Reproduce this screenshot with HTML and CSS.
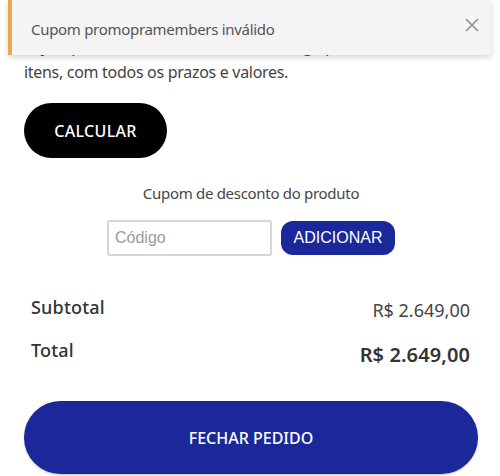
FILE: index.html
```html
<!DOCTYPE html>
<html lang="pt-BR">
<head>
<meta charset="utf-8">
<title>Carrinho</title>
<link rel="stylesheet" href="styles.css">
</head>
<body>
<main class="page">
  <p class="intro"><span class="intro-line">Veja o prazo e o valor do frete de entrega para seus</span><span class="intro-line">itens, com todos os prazos e valores.</span></p>
  <button class="btn-calc" type="button">CALCULAR</button>
  <section class="coupon">
    <div class="coupon-label">Cupom de desconto do produto</div>
    <div class="coupon-row">
      <input class="coupon-input" type="text" placeholder="Código">
      <button class="btn-add" type="button">ADICIONAR</button>
    </div>
  </section>
  <div class="summary">
    <div class="sum-row sub"><span class="sum-label">Subtotal</span><span class="sum-value">R$ 2.649,00</span></div>
    <div class="sum-row total"><span class="sum-label">Total</span><span class="sum-value">R$ 2.649,00</span></div>
  </div>
  <button class="btn-checkout" type="button">FECHAR PEDIDO</button>
</main>
<div class="toast">
  <span class="toast-text">Cupom promopramembers inválido</span>
  <svg class="toast-close" width="14" height="14" viewBox="0 0 14 14" aria-hidden="true"><path d="M1 1 L13 13 M13 1 L1 13" stroke="#8a8a8a" stroke-width="1.5" fill="none"/></svg>
</div>
</body>
</html>
```
FILE: styles.css
```css
* { box-sizing: border-box; }
html, body { margin: 0; padding: 0; background: #fff; }
body {
  font-family: "Noto Sans", "Open Sans", sans-serif;
  color: #444;
  width: 500px;
  height: 476px;
  overflow: hidden;
  position: relative;
}
.page {
  padding: 33px 22px 0 24px;
  display: flex;
  flex-direction: column;
}
.intro {
  margin: 0;
  font-size: 16px;
  letter-spacing: -0.3px;
  line-height: 26px;
  color: #444;
}
.intro-line {
  display: block;
  white-space: nowrap;
}
.btn-calc {
  margin-top: 18px;
  align-self: flex-start;
  width: 143px;
  height: 55px;
  border: none;
  border-radius: 28px;
  background: #000;
  color: #fff;
  font-family: "Noto Sans", sans-serif;
  font-size: 16px;
  font-weight: 500;
  letter-spacing: 0.3px;
}
.coupon {
  margin-top: 25px;
  display: flex;
  flex-direction: column;
  align-items: center;
  gap: 17px;
}
.coupon-label {
  font-size: 15px;
  letter-spacing: -0.3px;
  line-height: 20px;
  color: #444;
}
.coupon-row {
  display: flex;
  gap: 9px;
  align-items: center;
}
.coupon-input {
  width: 165px;
  height: 36px;
  border: 2px solid #d6d6d6;
  border-radius: 3px;
  padding: 0 6px;
  font-family: "Liberation Sans", Arial, sans-serif;
  font-size: 16px;
  color: #333;
  outline: none;
}
.coupon-input::placeholder { color: #9a9a9a; }
.btn-add {
  width: 114px;
  height: 34px;
  border: none;
  border-radius: 12px;
  background: #1b2899;
  color: #fff;
  font-family: "Liberation Sans", Arial, sans-serif;
  font-size: 16px;
  padding: 0;
}
.summary {
  margin-top: 38px;
  padding: 0 8px 0 7px;
  display: flex;
  flex-direction: column;
  gap: 17px;
}
.sum-row {
  display: flex;
  justify-content: space-between;
  align-items: baseline;
  line-height: 26px;
}
.sum-label {
  font-size: 18px;
  font-weight: 500;
  letter-spacing: 0.2px;
  color: #333;
}
.sub .sum-value { font-size: 18px; color: #444; position: relative; top: 3px; }
.total .sum-value { font-size: 20px; letter-spacing: 0.1px; font-weight: 600; color: #333; position: relative; top: 5px; }
.btn-checkout {
  margin-top: 38px;
  width: 454px;
  height: 73px;
  border: none;
  border-radius: 37px;
  background: #1b2899;
  color: #fff;
  font-family: "Noto Sans", sans-serif;
  font-size: 16px;
  font-weight: 500;
  box-shadow: 0 1px 2px rgba(0,0,0,0.25);
}
.toast {
  position: absolute;
  top: 0;
  left: 8px;
  width: 483px;
  height: 55px;
  background: #f4f4f4;
  border-left: 4px solid #e8a84c;
  box-shadow: 0 2px 6px rgba(0,0,0,0.18);
  display: flex;
  align-items: center;
  justify-content: space-between;
  padding: 2px 12px 0 19px;
}
.toast-text {
  font-size: 15px;
  letter-spacing: -0.3px;
  color: #555;
}
.toast-close { margin-top: -7px; }
```
